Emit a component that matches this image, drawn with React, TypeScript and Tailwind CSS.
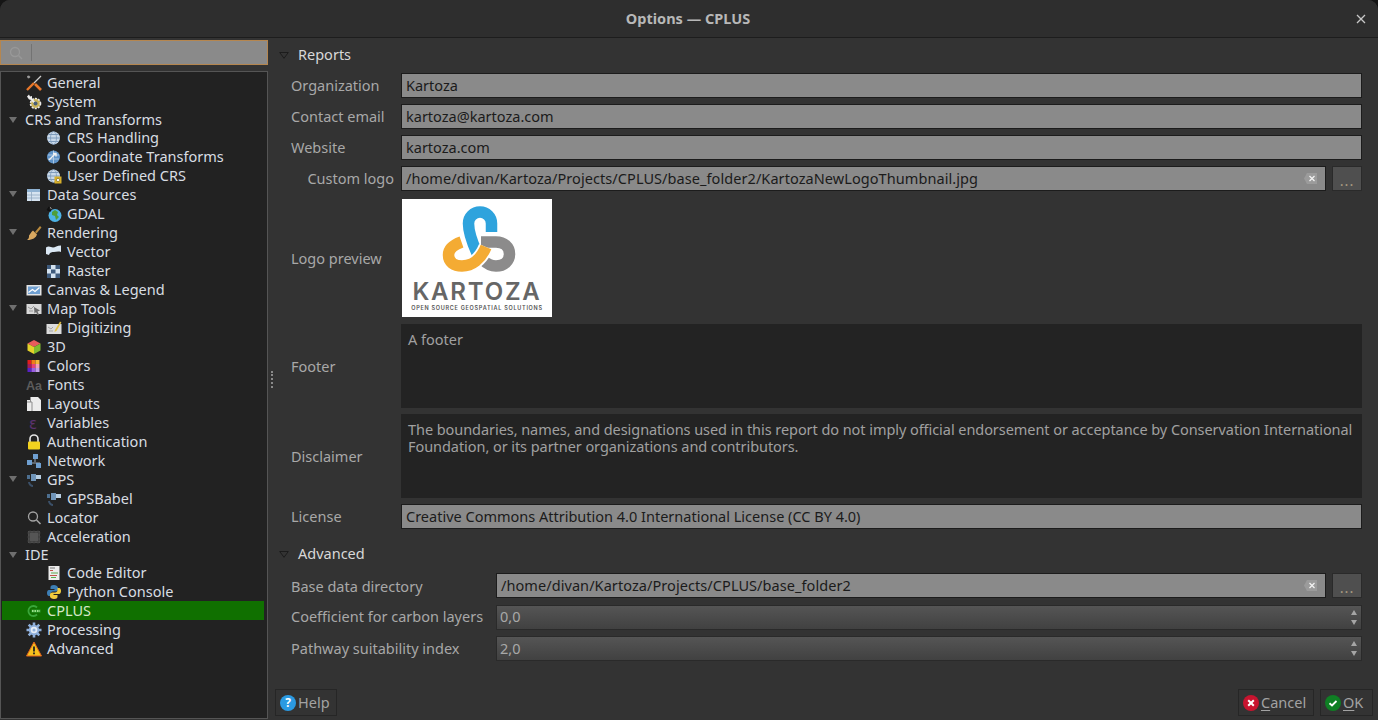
import { ReactNode } from "react";

type Row = { label: string; icon?: string; level: 0 | 1; open?: boolean; active?: boolean };

const rows: Row[] = [
  { label: "General", icon: "general", level: 0 },
  { label: "System", icon: "system", level: 0 },
  { label: "CRS and Transforms", level: 0, open: true },
  { label: "CRS Handling", icon: "crs", level: 1 },
  { label: "Coordinate Transforms", icon: "transform", level: 1 },
  { label: "User Defined CRS", icon: "usercrs", level: 1 },
  { label: "Data Sources", icon: "data", level: 0, open: true },
  { label: "GDAL", icon: "gdal", level: 1 },
  { label: "Rendering", icon: "brush", level: 0, open: true },
  { label: "Vector", icon: "vector", level: 1 },
  { label: "Raster", icon: "raster", level: 1 },
  { label: "Canvas & Legend", icon: "canvas", level: 0 },
  { label: "Map Tools", icon: "maptools", level: 0, open: true },
  { label: "Digitizing", icon: "digitizing", level: 1 },
  { label: "3D", icon: "cube", level: 0 },
  { label: "Colors", icon: "colors", level: 0 },
  { label: "Fonts", icon: "fonts", level: 0 },
  { label: "Layouts", icon: "layouts", level: 0 },
  { label: "Variables", icon: "variables", level: 0 },
  { label: "Authentication", icon: "lock", level: 0 },
  { label: "Network", icon: "network", level: 0 },
  { label: "GPS", icon: "gps", level: 0, open: true },
  { label: "GPSBabel", icon: "gps", level: 1 },
  { label: "Locator", icon: "locator", level: 0 },
  { label: "Acceleration", icon: "chip", level: 0 },
  { label: "IDE", level: 0, open: true },
  { label: "Code Editor", icon: "code", level: 1 },
  { label: "Python Console", icon: "python", level: 1 },
  { label: "CPLUS", icon: "cplus", level: 0, active: true },
  { label: "Processing", icon: "gear", level: 0 },
  { label: "Advanced", icon: "warning", level: 0 },
];

function TreeIcon({ name }: { name: string }) {
  const globe = (
    <>
      <circle cx="7.5" cy="8" r="6.5" fill="#c9d9ea" />
      <path d="M1 8h13M2.5 4.5h10M2.5 11.5h10" stroke="#7f9cbc" strokeWidth="1" fill="none" />
      <ellipse cx="7.5" cy="8" rx="3" ry="6.5" stroke="#7f9cbc" strokeWidth=".8" fill="none" />
    </>
  );
  let body: ReactNode = null;
  switch (name) {
    case "general":
      body = (
        <>
          <path d="M1 1l8 8" stroke="#1a1a1a" strokeWidth="1.5" />
          <path d="M1 1l2-.5L4.500 2 3 3.500 1.500 3z" fill="#9a9a9a" />
          <path d="M9 9l6 6" stroke="#e8772a" strokeWidth="2.6" />
          <path d="M15 1L8 8" stroke="#cfcfcf" strokeWidth="1.300" />
          <path d="M8 8l-7 7" stroke="#e8772a" strokeWidth="2.400" />
        </>
      );
      break;
    case "system":
      body = (
        <>
          <circle cx="9.5" cy="9.5" r="5" fill="#c9b35a" stroke="#e8e8e8" strokeWidth="1.6" strokeDasharray="2 1.2" />
          <path d="M1 2.500L3 .5l1 2 2-.5L6 6 3 5.500z" fill="#eee" />
          <path d="M5 5l4 4" stroke="#eee" strokeWidth="1.8" />
          <circle cx="9.5" cy="9.5" r="2" fill="#4a5f78" />
        </>
      );
      break;
    case "crs":
      body = globe;
      break;
    case "transform":
      body = (
        <>
          <circle cx="7.5" cy="8" r="6.5" fill="#5f93c8" />
          <path d="M2 6h11M2 10h11M7.5 1.5v13" stroke="#bcd3ea" strokeWidth=".8" />
          <path d="M3 11l6-6M7 4.5h3v3" stroke="#f2f2f2" strokeWidth="1.4" fill="none" />
        </>
      );
      break;
    case "usercrs":
      body = (
        <>
          {globe}
          <rect x="8.5" y="8.5" width="7" height="7" fill="#d8b02b" />
          <circle cx="12" cy="12" r="1.6" fill="#fff" stroke="#7a6410" strokeWidth=".6" />
        </>
      );
      break;
    case "data":
      body = (
        <>
          <rect x="1" y="2" width="13" height="12" fill="#d5e3f0" />
          <rect x="1" y="2" width="13" height="3" fill="#8fb2d2" />
          <path d="M5.5 5v9M1 8h13M1 11h13" stroke="#8fa8c0" strokeWidth=".8" />
        </>
      );
      break;
    case "gdal":
      body = (
        <>
          <circle cx="9" cy="9.500" r="6.500" fill="#4db3e6" />
          <path d="M6 6l3-2 3 2-1 3 2 2-3 3-1-4-3-1z" fill="#4f9e3a" />
          <path d="M1 3l4 2M3 1L2 5" stroke="#111" strokeWidth="1.6" />
          <path d="M4 1.500l1.500 1" stroke="#bbb" strokeWidth="1" />
        </>
      );
      break;
    case "brush":
      body = (
        <>
          <path d="M9 7l5-6 1.500 1.500-5 6z" fill="#b98a3e" />
          <path d="M7 5.500l4 4c-1 3-4 5.500-10 5.500 2-1 2-3 2-4.500 1-1 2-3.500 4-5z" fill="#d9a860" />
        </>
      );
      break;
    case "vector":
      body = <path d="M0 3.500c3-2 5 0 7 0s4-2 8-2v6.500c-3-1-5 0-7 0s-4 0-5 3L0 10z" fill="#dbe8f4" />;
      break;
    case "raster":
      body = (
        <>
          <rect x="1" y="2" width="13" height="13" fill="#d5e3f0" />
          <path d="M1 2h4v4H1zM9.500 2H14v4H9.500zM5 6.500h4.500v4H5zM1 10.500h4V15H1zM9.500 10.500H14V15H9.500z" fill="#3e5a7c" />
        </>
      );
      break;
    case "canvas":
      body = (
        <>
          <rect x="0.500" y="3" width="15" height="10.500" fill="#e4e4e4" />
          <path d="M2 4.500h12V12H2z" fill="#6f9fd0" />
          <path d="M2.500 10.500l4-3 2.500 2 4.500-4" stroke="#fff" strokeWidth="1.300" fill="none" />
        </>
      );
      break;
    case "maptools":
      body = (
        <>
          <rect x="0.500" y="3" width="15" height="10" fill="#d9d9d9" />
          <path d="M2 6l3 2 3-3M3 10h4" stroke="#999" strokeWidth="1" fill="none" />
          <path d="M8 6l6 3.500-2.500 1 1.500 3-1.500.5-1.500-3-1.500 1.500z" fill="#6b6b6b" />
        </>
      );
      break;
    case "digitizing":
      body = (
        <>
          <rect x="0.500" y="4" width="15" height="10" fill="#dcdcdc" />
          <path d="M2 7l3 2 2-2M3 11h4" stroke="#a5a5a5" strokeWidth="1" fill="none" />
          <path d="M9 10l5-8.500 1.400 1-5 8.500-2 1z" fill="#e3c243" />
        </>
      );
      break;
    case "cube":
      body = (
        <>
          <path d="M8 1l6.500 3.500L8 8 1.500 4.500z" fill="#e85c5c" />
          <path d="M1.500 4.500L8 8v7l-6.500-3.500z" fill="#e4d22a" />
          <path d="M14.500 4.500L8 8v7l6.500-3.500z" fill="#7fbb2f" />
        </>
      );
      break;
    case "colors":
      body = (
        <>
          {["#e21d1d", "#f07c1a", "#f4b83a", "#a51f5a", "#e8407a", "#f2a0b8", "#5a22c8", "#9a5fe0", "#c4a0ea"].map((c, i) => (
            <rect key={c} x={1.5 + (i % 3) * 4} y={2 + Math.floor(i / 3) * 4} width="4" height="4" fill={c} />
          ))}
        </>
      );
      break;
    case "fonts":
      body = (
        <text x="0" y="13" fontSize="12.500" fontWeight="700" fill="#5c5c5c" fontFamily="'Liberation Sans',sans-serif">
          Aa
        </text>
      );
      break;
    case "layouts":
      body = (
        <>
          <path d="M1 4h3V1h8l3 3v11H1z" fill="#ececec" />
          <path d="M4.500 1v5M1 6h5v9" stroke="#8d8d8d" strokeWidth="1" fill="none" />
        </>
      );
      break;
    case "variables":
      body = (
        <text x="3" y="13.500" fontSize="15" fill="#5b3270" fontFamily="'DejaVu Sans',sans-serif">
          ε
        </text>
      );
      break;
    case "lock":
      body = (
        <>
          <path d="M4 8V5a4 4 0 018 0v3" stroke="#e5e5e5" strokeWidth="1.600" fill="none" />
          <rect x="2" y="7.500" width="12" height="8" rx="1" fill="#f2d21f" />
        </>
      );
      break;
    case "network":
      body = (
        <>
          <path d="M9 3v6M2 10h12" stroke="#9aa9b8" strokeWidth="1" />
          <rect x="7" y="1" width="5" height="5" fill="#6f9fd0" />
          <rect x="1" y="7" width="5" height="5" fill="#6f9fd0" />
          <rect x="10" y="10" width="5" height="5" fill="#6f9fd0" />
        </>
      );
      break;
    case "gps":
      body = (
        <>
          <rect x="5" y="2" width="5" height="7" fill="#6f94b8" />
          <rect x="10" y="3" width="5" height="4" fill="#b9cfe2" />
          <rect x="1" y="3" width="3" height="4" fill="#4d6f90" />
          <path d="M3 10c0 2 2 4 4 4" stroke="#3b5068" strokeWidth="2" fill="none" />
        </>
      );
      break;
    case "locator":
      body = (
        <>
          <circle cx="7" cy="6.500" r="4.500" stroke="#a3a3a3" strokeWidth="1.300" fill="none" />
          <path d="M10.500 10l4 4" stroke="#a3a3a3" strokeWidth="1.600" />
        </>
      );
      break;
    case "chip":
      body = (
        <>
          <rect x="2" y="2" width="12" height="12" fill="#4d4d4d" />
          <path d="M1 4h14M1 8h14M1 12h14M4 1v14M8 1v14M12 1v14" stroke="#3a3a3a" strokeWidth=".8" />
          <rect x="4" y="4" width="8" height="8" fill="#555" />
        </>
      );
      break;
    case "code":
      body = (
        <>
          <rect x="2.500" y="1" width="11" height="14" fill="#ececec" />
          <path d="M4 3h5" stroke="#777" strokeWidth="1" />
          <path d="M4 5.500h3M4 10.500h7" stroke="#c0554a" strokeWidth="1" />
          <path d="M5 8h7M5 12.500h5" stroke="#5aa84f" strokeWidth="1" />
        </>
      );
      break;
    case "python":
      body = (
        <>
          <path d="M8 1C5 1 4.500 2 4.500 3.500V5H8.500v1H3C1.500 6 1 7.500 1 9s.5 3 2 3h1.500v-2c0-1.500 1-2.500 2.500-2.500h3c1 0 2-.9 2-2v-2C11.500 2 10 1 8 1z" fill="#3d7fb5" />
          <path d="M8 15c3 0 3.500-1 3.500-2.500V11H7.500v-1H13c1.500 0 2-1.500 2-3s-.5-3-2-3h-1.500v2C11.500 7.500 10.500 8.500 9 8.500H6c-1 0-2 .9-2 2v2C4 14 6 15 8 15z" fill="#f2cc3e" />
        </>
      );
      break;
    case "cplus":
      body = (
        <>
          <path d="M11 4.500A5 5 0 1 0 11 11.500" stroke="#3aa63a" strokeWidth="1.800" fill="none" />
          <path d="M5.500 6.500h9v3h-9z" fill="#2f9a2f" />
          <path d="M6 8h8" stroke="#9adf8a" strokeWidth="1.800" strokeDasharray="1.500 1" />
        </>
      );
      break;
    case "gear":
      body = (
        <>
          <path d="M8 .5v15M.5 8h15M2.700 2.700l10.600 10.600M13.300 2.700L2.700 13.300" stroke="#8fb0dc" strokeWidth="2.600" />
          <circle cx="8" cy="8" r="5.200" fill="#8fb0dc" />
          <circle cx="8" cy="8" r="3.300" fill="#e4ecf6" />
          <circle cx="8" cy="8" r="1.500" fill="#8fb0dc" />
        </>
      );
      break;
    case "warning":
      body = (
        <>
          <path d="M8 1l7.500 14H.5z" fill="#f7c21d" stroke="#e2621b" strokeWidth="1" strokeLinejoin="round" />
          <path d="M8 5.500v5" stroke="#222" strokeWidth="1.800" />
          <path d="M8 11.500v1.800" stroke="#222" strokeWidth="1.800" />
        </>
      );
      break;
  }
  return (
    <svg width="16" height="16" viewBox="0 0 16 16" className="shrink-0">
      {body}
    </svg>
  );
}

function TreeRow({ row }: { row: Row }) {
  const left = row.level === 1 ? "pl-[44px]" : row.icon ? "pl-[24px]" : "pl-[23px]";
  const height = row.icon ? "h-[19px]" : "h-[17px]";
  return (
    <div className={`relative flex items-center ${height} ${left} ${row.active ? "bg-[#107000] text-[#d5e8c8]" : ""}`}>
      {row.open && <span className="absolute left-[7px] top-[6px] h-0 w-0 border-x-[4px] border-t-[6px] border-x-transparent border-t-[#6f6f6f]" />}
      {row.icon && <TreeIcon name={row.icon} />}
      <span className={row.icon ? "ml-[5px]" : ""}>{row.label}</span>
    </div>
  );
}

function Input({ value }: { value: string }) {
  return <div className="flex h-[25px] min-w-0 flex-1 items-center border border-[#1c1c1c] bg-[#8a8a8a] pl-[4px] text-[#1b1b1b] whitespace-nowrap">{value}</div>;
}

function PathInput({ value }: { value: string }) {
  return (
    <div className="flex gap-[6px]">
      <div className="flex h-[25px] min-w-0 flex-1 items-center justify-between border border-[#1c1c1c] bg-[#8a8a8a] pl-[4px] pr-[8px] tracking-[.07px] text-[#1b1b1b] whitespace-nowrap">
        <span>{value}</span>
        <svg width="13" height="11" viewBox="0 0 13 11">
          <path d="M3 0h10v11H3L0 5.500z" fill="#9b9b9b" />
          <path d="M5.500 3l5 5M10.500 3l-5 5" stroke="#f2f2f2" strokeWidth="1.300" />
        </svg>
      </div>
      <div className="flex h-[25px] w-[30px] items-center justify-center border border-[#2a2a2a] bg-[#4f4f4f] pt-[3px] text-[#a89a80] leading-none">
        <span className="tracking-[1px]">...</span>
      </div>
    </div>
  );
}

function SpinBox({ value }: { value: string }) {
  return (
    <div className="flex h-[25px] items-center justify-between border border-[#2a2a2a] bg-gradient-to-b from-[#555555] to-[#414141] pl-[3px] pr-[4px] text-[#a8a8a8]">
      <span>{value}</span>
      <span className="flex flex-col gap-[5px]">
        <span className="h-0 w-0 border-x-[3px] border-b-[5px] border-x-transparent border-b-[#a5a5a5]" />
        <span className="h-0 w-0 border-x-[3px] border-t-[5px] border-x-transparent border-t-[#a5a5a5]" />
      </span>
    </div>
  );
}

function Section({ title }: { title: string }) {
  return (
    <div className="flex h-[22px] items-center pl-[4px] text-[#d8d8d8]">
      <svg width="10" height="7" viewBox="0 0 10 7" className="mr-[9px]">
        <path d="M.7.500h8.600L5 6.300z" fill="none" stroke="#1c1c1c" strokeWidth="1" />
      </svg>
      {title}
    </div>
  );
}

function KartozaLogo() {
  return (
    <div className="flex h-[118px] w-[150px] flex-col items-center bg-white">
      <svg width="150" height="80" viewBox="0 0 150 80" className="shrink-0">
        <path d="M79 43H94C102 43 107.500 48 107.500 55 107.500 62 102 67 94 67 89 67 85 65 81 61" fill="none" stroke="#8c8b8b" strokeWidth="11.500" />
        <path d="M89.500 33V24.500A11.500 11.500 0 0 0 66.500 24.500C66.500 33 70 43 75 54" fill="none" stroke="#2ea3dd" strokeWidth="11.500" />
        <path d="M84 48C79 60 70 67 60 67 52 67 46.500 63 46.500 56 46.500 50 51 46 59.500 43" fill="none" stroke="#fff" strokeWidth="15" />
        <path d="M84 48C79 60 70 67 60 67 52 67 46.500 63 46.500 56 46.500 50 51 46 59.500 43" fill="none" stroke="#f4ab33" strokeWidth="11.500" />
      </svg>
      <div className="text-[24px] font-semibold leading-[26px] tracking-[1.800px] text-[#666666] [font-family:Inter,sans-serif]">KARTOZA</div>
      <div className="whitespace-nowrap text-[5.500px] font-semibold leading-[7px] tracking-[.72px] text-[#555] [font-family:Inter,sans-serif]">OPEN SOURCE GEOSPATIAL SOLUTIONS</div>
    </div>
  );
}

function DialogButton({ icon, width, children }: { icon: ReactNode; width: string; children: ReactNode }) {
  return (
    <div className={`flex h-[27px] items-center gap-[2px] border border-[#262626] bg-[#333333] pl-[4px] text-[#a2a2a2] ${width}`}>
      {icon}
      <span>{children}</span>
    </div>
  );
}

export default function App() {
  return (
    <div className="h-screen w-full overflow-hidden bg-[#151515] text-[14.500px] [font-family:'Noto_Sans',sans-serif]">
      <div className="flex h-full flex-col overflow-hidden rounded-t-[10px] bg-[#333333]">
        <div className="relative flex h-[38px] shrink-0 items-center justify-center border-b border-[#1d1d1d] bg-[#2e2e2e] pr-[2px] pt-[1px] font-bold text-[#b8b8b8]">
          Options — CPLUS
          <svg width="10" height="10" viewBox="0 0 10 10" className="absolute right-[12px] top-[14px]">
            <path d="M1 1l8 8M9 1L1 9" stroke="#c8c8c8" strokeWidth="1.300" />
          </svg>
        </div>

        <div className="flex min-h-0 flex-1">
          <div className="flex w-[268px] shrink-0 flex-col pt-[2px]">
            <div className="flex h-[25px] items-center border border-[#b5864f] bg-[#8a8a8a] pl-[8px]">
              <svg width="14" height="14" viewBox="0 0 14 14">
                <circle cx="6" cy="6" r="4.500" fill="none" stroke="#989898" strokeWidth="1.300" />
                <path d="M9.500 9.500l3.500 3.500" stroke="#989898" strokeWidth="1.500" />
              </svg>
              <span className="ml-[8px] h-[17px] w-px bg-[#737373]" />
            </div>
            <div className="mb-[1px] mt-[6px] flex-1 border border-[#555555] bg-[#222222] pl-[1px] pr-[3px] pt-[1px] text-[#d8dde2]">
              {rows.map((row) => (
                <TreeRow key={row.label} row={row} />
              ))}
            </div>
          </div>

          <div className="flex w-[7px] shrink-0 items-center pl-[3px]">
            <span className="h-[17px] w-[2px] border-l-2 border-dotted border-[#8a8a8a]" />
          </div>

          <div className="flex min-w-0 flex-1 flex-col pt-[6px]">
            <div className="pl-0 pr-[16px]">
              <Section title="Reports" />
              <div className="ml-[16px] mt-[7px] grid grid-cols-[110px_minmax(0,1fr)] items-center gap-y-[6px] text-[#a8a8a8]">
                <span>Organization</span>
                <Input value="Kartoza" />
                <span>Contact email</span>
                <Input value="kartoza@kartoza.com" />
                <span>Website</span>
                <Input value="kartoza.com" />
                <span className="pr-[7px] pt-[1px] text-right">Custom logo</span>
                <PathInput value="/home/divan/Kartoza/Projects/CPLUS/base_folder2/KartozaNewLogoThumbnail.jpg" />
                <span className="pt-[2px]">Logo preview</span>
                <div className="pb-px pl-px pt-[2px]">
                  <KartozaLogo />
                </div>
                <span className="pt-[2px]">Footer</span>
                <div className="h-[84px] bg-[#232323] px-[7px] pt-[7px] leading-[17px] text-[#a0a0a0]">A footer</div>
                <span className="pt-[2px]">Disclaimer</span>
                <div className="h-[84px] whitespace-nowrap bg-[#232323] px-[7px] pt-[7px] leading-[17px] tracking-[-.06px] text-[#a0a0a0]">
                  The boundaries, names, and designations used in this report do not imply official endorsement or acceptance by Conservation International
                  <br />
                  Foundation, or its partner organizations and contributors.
                </div>
                <span>License</span>
                <Input value="Creative Commons Attribution 4.0 International License (CC BY 4.0)" />
              </div>

              <div className="mt-[14px]">
                <Section title="Advanced" />
              </div>
              <div className="ml-[16px] mt-[8px] grid grid-cols-[205px_minmax(0,1fr)] items-center gap-y-[6.500px] text-[#a8a8a8]">
                <span className="pt-[2px]">Base data directory</span>
                <PathInput value="/home/divan/Kartoza/Projects/CPLUS/base_folder2" />
                <span>Coefficient for carbon layers</span>
                <SpinBox value="0,0" />
                <span>Pathway suitability index</span>
                <SpinBox value="2,0" />
              </div>
            </div>

            <div className="mt-auto flex items-center justify-between pb-[4px] pr-[5px]">
              <DialogButton
                width="w-[62px]"
                icon={
                  <span className="flex h-[16px] w-[16px] items-center justify-center rounded-full bg-[#2b9ae2] text-[12px] font-bold leading-none text-white">?</span>
                }
              >
                Help
              </DialogButton>
              <div className="flex gap-[6px]">
                <DialogButton
                  width="w-[76px]"
                  icon={
                    <svg width="16" height="16" viewBox="0 0 16 16">
                      <circle cx="8" cy="8" r="8" fill="#c8142f" />
                      <path d="M5.200 5.200l5.600 5.600M10.800 5.200l-5.600 5.600" stroke="#fff" strokeWidth="2" />
                    </svg>
                  }
                >
                  <span className="underline underline-offset-2">C</span>ancel
                </DialogButton>
                <DialogButton
                  width="w-[53px]"
                  icon={
                    <svg width="16" height="16" viewBox="0 0 16 16">
                      <circle cx="8" cy="8" r="8" fill="#0f7f24" />
                      <path d="M4.500 8.300l2.500 2.200 4.500-4.500" stroke="#fff" strokeWidth="1.800" fill="none" />
                    </svg>
                  }
                >
                  <span className="underline underline-offset-2">O</span>K
                </DialogButton>
              </div>
            </div>
          </div>
        </div>
      </div>
    </div>
  );
}
